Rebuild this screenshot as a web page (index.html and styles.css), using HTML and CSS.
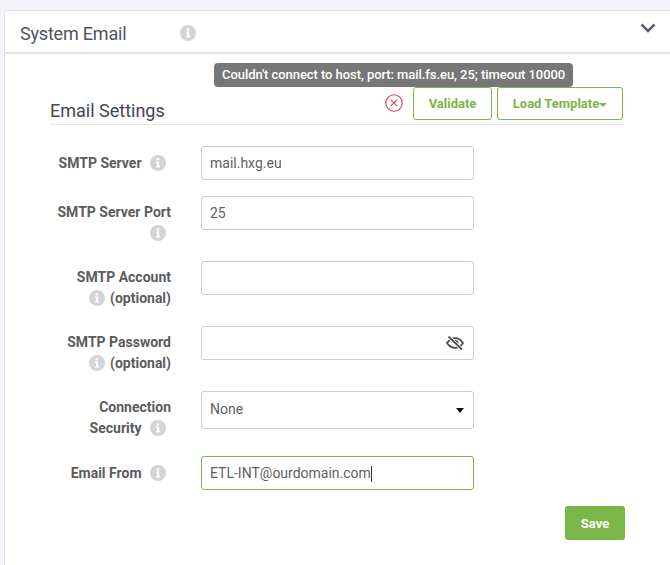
FILE: index.html
```html
<!DOCTYPE html>
<html>
<head>
  <title>System Email</title>
  <link rel="stylesheet" href="styles.css">
</head>
<body>
  <svg class="icon-defs" width="0" height="0">
    <symbol id="info" viewBox="0 0 16 16">
      <circle cx="8" cy="8" r="8" fill="#d4d4d4"/>
      <path d="M6.600 3.200h2.600v2.200H6.600zM6 6.600h3.200v4.600h1v1.400H6v-1.400h1V8H6z" fill="#fff"/>
    </symbol>
  </svg>

  <div class="panel">
    <div class="panel-header">
      <span class="panel-title">System Email</span>
      <svg class="info info-title"><use href="#info"/></svg>
      <svg class="chevron" viewBox="0 0 16 10"><path d="M1.500 1.500 8 8l6.500-6.500" fill="none" stroke="#59616d" stroke-width="2.600"/></svg>
    </div>

    <div class="panel-body">
      <div class="tooltip">Couldn't connect to host, port: mail.fs.eu, 25; timeout 10000</div>

      <div class="section-head">
        <h2>Email Settings</h2>
        <div class="actions">
          <svg class="status-error" viewBox="0 0 18 18">
            <circle cx="9" cy="9" r="8.200" fill="none" stroke="#d8474b" stroke-width="1.100"/>
            <path d="M5.800 5.800l6.400 6.400M12.200 5.800l-6.400 6.400" stroke="#d8474b" stroke-width="1.100"/>
          </svg>
          <button class="btn btn-validate">Validate</button>
          <button class="btn btn-template">Load Template<span class="btn-caret"></span></button>
        </div>
      </div>

      <div class="form-row">
        <label class="form-label label-single">SMTP Server <svg class="info"><use href="#info"/></svg></label>
        <input class="field" type="text" value="mail.hxg.eu">
      </div>
      <div class="form-row">
        <label class="form-label">SMTP Server Port<br><svg class="info"><use href="#info"/></svg></label>
        <input class="field" type="text" value="25">
      </div>
      <div class="form-row">
        <label class="form-label">SMTP Account<br><svg class="info info-optional"><use href="#info"/></svg> (optional)</label>
        <input class="field" type="text">
      </div>
      <div class="form-row">
        <label class="form-label">SMTP Password<br><svg class="info info-optional"><use href="#info"/></svg> (optional)</label>
        <div class="field-wrap">
          <input class="field" type="password">
          <svg class="eye-off" viewBox="0 0 18 14">
            <path d="M1 7c2-3 4.800-4.800 8-4.800S15 4 17 7c-2 3-4.800 4.800-8 4.800S3 10 1 7z" fill="none" stroke="#4d4d4d" stroke-width="1.800"/>
            <path d="M5.500 6.500c.4-2 2.200-3 4-2.800 2.200.3 3.400 2.200 3 4.300z" fill="#4d4d4d"/>
            <path d="M2.500.5l13.500 13" stroke="#fff" stroke-width="3.400"/>
            <path d="M2.500.5l13.500 13" stroke="#4d4d4d" stroke-width="1.800"/>
          </svg>
        </div>
      </div>
      <div class="form-row">
        <label class="form-label">Connection<br>Security <svg class="info"><use href="#info"/></svg></label>
        <div class="field-wrap">
          <select class="field field-select">
            <option>None</option>
          </select>
          <span class="select-caret"></span>
        </div>
      </div>
      <div class="form-row">
        <label class="form-label label-single">Email From <svg class="info"><use href="#info"/></svg></label>
        <div class="field field-focus">ETL-INT@ourdomain.com<span class="text-caret"></span></div>
      </div>

      <div class="form-footer">
        <button class="btn-save">Save</button>
      </div>
    </div>
  </div>
</body>
</html>
```

FILE: styles.css
```css
body {
  font-family: Roboto, "Liberation Sans", sans-serif;
  margin: 0;
  padding: 10px 0 0 4px;
  background-color: #f3f4f9;
  overflow: hidden;
}
.icon-defs {
  position: absolute;
}
.panel {
  background-color: #fff;
  border: 1px solid #e1e2e6;
  border-right: none;
  border-radius: 3px 0 0 0;
  height: 560px;
}
.panel-header {
  display: flex;
  align-items: center;
  height: 41px;
  padding-left: 15px;
  border-bottom: 2px solid #e3e3e3;
}
.panel-title {
  font-size: 18px;
  letter-spacing: -0.2px;
  color: #4d5460;
  width: 160px;
  padding-top: 3px;
}
.info {
  display: inline-block;
  width: 16px;
  height: 16px;
  vertical-align: -3px;
  margin: 0 5px;
}
.info-optional {
  margin-right: 2px;
}
.info-title {
  margin: 3px 0 0 0;
}
.chevron {
  width: 16px;
  height: 10px;
  margin-left: auto;
  margin-right: 14px;
  margin-top: -8px;
}
.panel-body {
  position: relative;
  padding: 33px 0 0 45px;
}
.tooltip {
  position: absolute;
  left: 209px;
  top: 9px;
  height: 24px;
  line-height: 24px;
  padding: 0 8px;
  background-color: #777;
  color: #fff;
  font-size: 13px;
  font-weight: 500;
  letter-spacing: -0.065px;
  border-radius: 4px;
  white-space: nowrap;
  z-index: 2;
}
.section-head {
  display: flex;
  justify-content: space-between;
  align-items: flex-end;
  width: 573px;
  padding-bottom: 4px;
  border-bottom: 1px solid #e5e5e5;
  margin-bottom: 21px;
}
.section-head h2 {
  margin: 0 0 -1px 0;
  font-size: 18px;
  font-weight: 400;
  color: #3f4654;
}
.actions {
  display: flex;
  align-items: center;
  gap: 5px;
}
.status-error {
  width: 18px;
  height: 18px;
  margin-right: 5px;
  margin-top: -1px;
}
.btn {
  height: 33px;
  padding: 0;
  background-color: #fff;
  border: 1px solid #7ab648;
  border-radius: 3px;
  color: #7ab648;
  font-family: inherit;
  font-size: 13px;
  font-weight: 700;
}
.btn-validate {
  width: 79px;
}
.btn-template {
  width: 126px;
}
.btn-caret {
  display: inline-block;
  border-top: 4px solid #7ab648;
  border-left: 4px solid transparent;
  border-right: 4px solid transparent;
  vertical-align: 1px;
}
.form-row {
  display: flex;
  align-items: flex-start;
  gap: 30px;
  margin-bottom: 16px;
}
.form-label {
  width: 121px;
  padding: 6px 0 1px;
  text-align: right;
  font-size: 14px;
  font-weight: 700;
  line-height: 21px;
  color: #5c5c5c;
  white-space: nowrap;
}
.label-single {
  padding-top: 7px;
}
.field {
  display: block;
  box-sizing: border-box;
  width: 273px;
  height: 34px;
  padding: 0 8px;
  background-color: #fff;
  border: 1px solid #ccc;
  border-radius: 3px;
  font-family: inherit;
  font-size: 14px;
  color: #5f5f5f;
  outline: none;
}
.field-wrap {
  position: relative;
}
.field-select {
  height: 38px;
  padding-bottom: 3px;
  appearance: none;
  -webkit-appearance: none;
}
.select-caret {
  position: absolute;
  right: 10px;
  top: 17px;
  border-top: 5px solid #111;
  border-left: 4px solid transparent;
  border-right: 4px solid transparent;
}
.eye-off {
  position: absolute;
  right: 10px;
  top: 10px;
  width: 18px;
  height: 14px;
}
.field-focus {
  border-color: #7ab648;
  line-height: 32px;
}
.text-caret {
  display: inline-block;
  width: 1px;
  height: 16px;
  background-color: #333;
  vertical-align: -4px;
}
.form-footer {
  width: 575px;
  display: flex;
  justify-content: flex-end;
}
.btn-save {
  width: 60px;
  height: 34px;
  background-color: #7ab648;
  color: #fff;
  border: none;
  border-radius: 3px;
  font-family: inherit;
  font-size: 13px;
  font-weight: 700;
}
```
